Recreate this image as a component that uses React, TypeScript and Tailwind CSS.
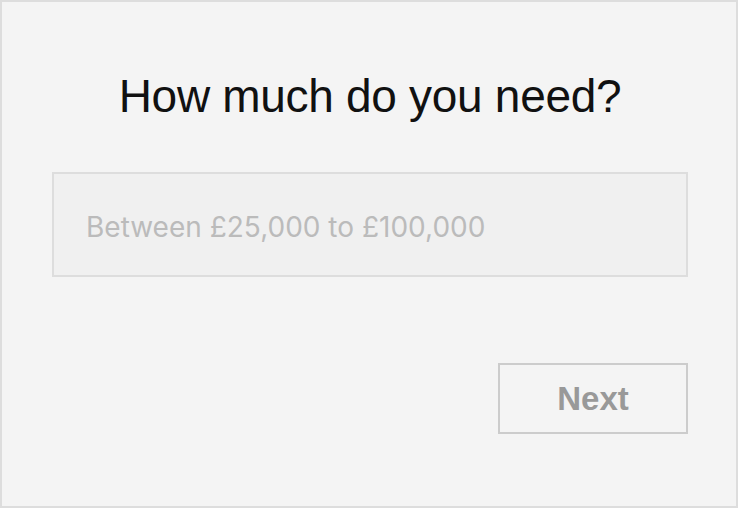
import React from 'react';

export default function App() {
  return (
    <div className="w-[738px] h-[508px] bg-[#f4f4f4] border-2 border-[#dddddd] pl-[50px] pr-[48px] flex flex-col font-['Liberation_Sans',Arial,sans-serif]">
      <h1 className="mt-[67px] text-center text-[46px] leading-[54px] text-[#111111] tracking-[-0.3px]">
        How much do you need?
      </h1>
      <input
        type="text"
        placeholder="Between £25,000 to £100,000"
        className="mt-[49px] h-[105px] w-full bg-[#f0f0f0] border-2 border-[#dddddd] px-[32px] pt-[4px] text-[28px] text-[#333] placeholder:text-[#bbbbbb] outline-none font-['Inter',sans-serif]"
      />
      <div className="mt-[86px] flex justify-end">
        <button className="w-[190px] h-[71px] border-2 border-[#cccccc] text-[33px] font-bold text-[#999999]">
          Next
        </button>
      </div>
    </div>
  );
}
